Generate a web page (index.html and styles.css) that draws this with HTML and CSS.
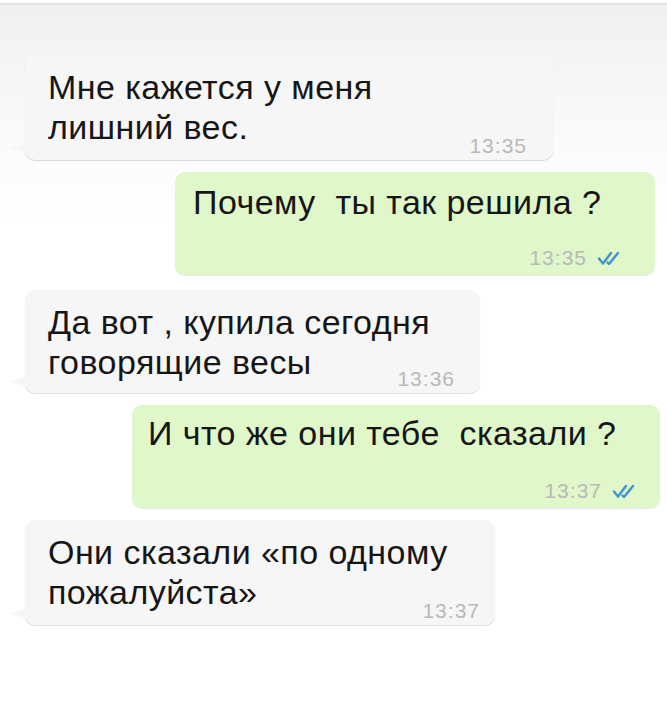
FILE: index.html
```html
<!DOCTYPE html>
<html lang="ru">
<head>
<meta charset="utf-8">
<link rel="stylesheet" href="styles.css">
</head>
<body>
<div class="topbar"></div>
<main class="chat">
  <div class="bubble in b1">
    <div class="text">Мне кажется у меня<br>лишний вес.</div>
    <div class="meta"><span class="time">13:35</span></div>
  </div>
  <div class="bubble out b2">
    <div class="text">Почему&nbsp; ты так решила ?</div>
    <div class="meta"><span class="time">13:35</span>
      <svg class="ticks" viewBox="0 0 28 16" width="28" height="16"><path d="M2 8.5 L6 13.5 L14 3 M10.5 12.5 L12 14 L21 3" fill="none" stroke="#3f93cf" stroke-width="2.4" stroke-linecap="round" stroke-linejoin="round"/></svg>
    </div>
  </div>
  <div class="bubble in b3">
    <div class="text">Да вот , купила сегодня<br>говорящие весы</div>
    <div class="meta"><span class="time">13:36</span></div>
  </div>
  <div class="bubble out b4">
    <div class="text">И что же они тебе&nbsp; сказали ?</div>
    <div class="meta"><span class="time">13:37</span>
      <svg class="ticks" viewBox="0 0 28 16" width="28" height="16"><path d="M2 8.5 L6 13.5 L14 3 M10.5 12.5 L12 14 L21 3" fill="none" stroke="#3f93cf" stroke-width="2.4" stroke-linecap="round" stroke-linejoin="round"/></svg>
    </div>
  </div>
  <div class="bubble in b5">
    <div class="text">Они сказали «по одному<br>пожалуйста»</div>
    <div class="meta"><span class="time">13:37</span></div>
  </div>
</main>
</body>
</html>
```
FILE: styles.css
```css
html, body {
  margin: 0;
  padding: 0;
  background: #ffffff;
}
body {
  width: 667px;
  height: 720px;
  overflow: hidden;
  font-family: "Liberation Sans", Arial, sans-serif;
  color: #161616;
  background: linear-gradient(to bottom, #f0f0f0 0px, #f3f3f3 40px, #f9f9f9 120px, #ffffff 220px);
}
.topbar {
  height: 3px;
  background: #fdfdfd;
  border-bottom: 2px solid #e4e4e4;
}
.chat {
  display: flex;
  flex-direction: column;
  padding-top: 50px;
  gap: 12px;
}
.bubble {
  position: relative;
  box-sizing: border-box;
  border-radius: 10px;
  padding: 12px 26px 2px 23px;
  display: grid;
}
.bubble > * {
  grid-area: 1 / 1;
}
.bubble.in {
  background: #f6f6f6;
  box-shadow: 0 1px 1px rgba(0,0,0,0.14);
  margin-left: 25px;
}
.bubble.in::before {
  content: "";
  position: absolute;
  left: -15px;
  bottom: 6px;
  width: 19px;
  height: 12px;
  background: #f6f6f6;
  clip-path: polygon(0 55%, 100% 0, 100% 100%);
}
.bubble.out {
  background: #e0f7c9;
  box-shadow: 0 1px 1px rgba(0,0,0,0.10);
}
.text {
  align-self: start;
  font-size: 34px;
  line-height: 40px;
  letter-spacing: 0.45px;
}
.meta {
  align-self: end;
  justify-self: end;
  display: flex;
  align-items: center;
  gap: 10px;
  font-size: 21px;
  line-height: 24px;
  color: #b9b9b9;
  letter-spacing: 1px;
}
.b1 { width: 528px; height: 105px; }
.b2 { width: 480px; height: 103px; margin-left: 175px; padding-top: 10px; padding-right: 30px; padding-bottom: 5px; padding-left: 18px; }
.b3 { width: 455px; height: 103px; margin-top: 3px; padding-right: 25px; }
.b4 { width: 528px; height: 103px; margin-left: 132px; padding-left: 16px; padding-top: 8px; padding-bottom: 5px; padding-right: 20px; }
.b5 { width: 470px; height: 105px; padding-right: 15px; }
```
